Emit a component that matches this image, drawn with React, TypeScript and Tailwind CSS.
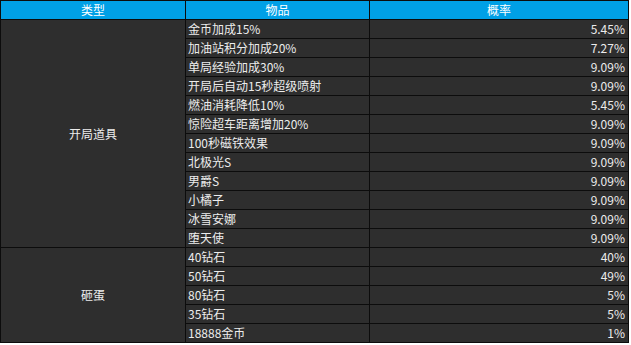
import React from "react";

const openItems: [string, string][] = [
  ["金币加成15%", "5.45%"],
  ["加油站积分加成20%", "7.27%"],
  ["单局经验加成30%", "9.09%"],
  ["开局后自动15秒超级喷射", "9.09%"],
  ["燃油消耗降低10%", "5.45%"],
  ["惊险超车距离增加20%", "9.09%"],
  ["100秒磁铁效果", "9.09%"],
  ["北极光S", "9.09%"],
  ["男爵S", "9.09%"],
  ["小橘子", "9.09%"],
  ["冰雪安娜", "9.09%"],
  ["堕天使", "9.09%"],
];

const eggItems: [string, string][] = [
  ["40钻石", "40%"],
  ["50钻石", "49%"],
  ["80钻石", "5%"],
  ["35钻石", "5%"],
  ["18888金币", "1%"],
];

const Rows = ({ items }: { items: [string, string][] }) => (
  <>
    {items.map(([name, rate]) => (
      <React.Fragment key={name}>
        <div className="bg-[#2e2e2e] pl-[2px] leading-[18px]">{name}</div>
        <div className="bg-[#2e2e2e] pr-[3px] text-right leading-[18px]">{rate}</div>
      </React.Fragment>
    ))}
  </>
);

const App = () => {
  return (
    <div className="bg-white w-[631px] h-[345px]">
      <div
        className="grid grid-cols-[184px_183px_258px] auto-rows-[18px] gap-px p-px bg-[#0c0c0c] w-[629px] text-[12px] text-[#ececec]"
        style={{ fontFamily: '"Noto Sans CJK SC", "Noto Sans", sans-serif' }}
      >
        {/* header */}
        <div className="bg-[#00a0e6] text-center leading-[18px] text-white">类型</div>
        <div className="bg-[#00a0e6] text-center leading-[18px] text-white">物品</div>
        <div className="bg-[#00a0e6] text-center leading-[18px] text-white">概率</div>

        <div className="row-span-12 bg-[#2e2e2e] flex items-center justify-center">开局道具</div>
        <Rows items={openItems} />

        <div className="row-span-5 bg-[#2e2e2e] flex items-center justify-center">砸蛋</div>
        <Rows items={eggItems} />
      </div>
    </div>
  );
};

export default App;
